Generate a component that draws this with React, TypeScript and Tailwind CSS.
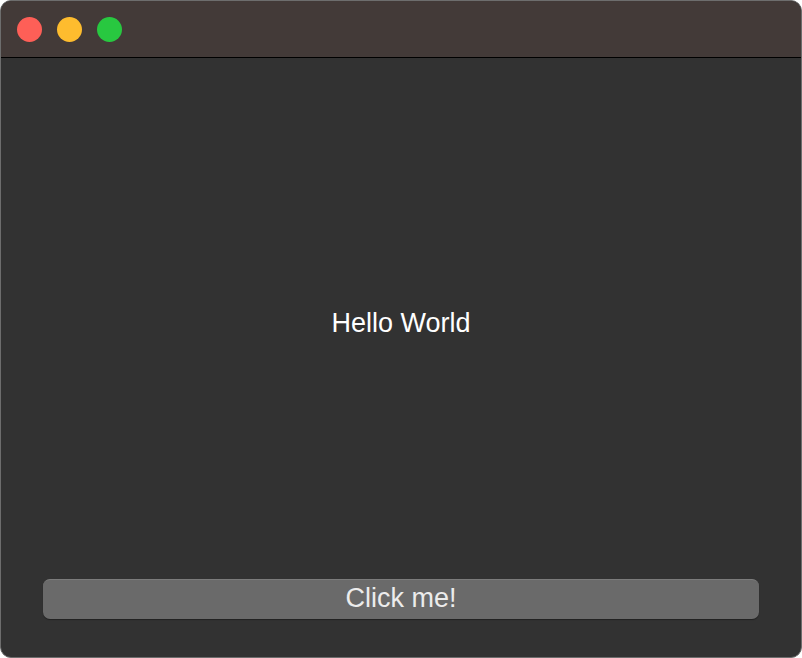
export default function App() {
  return (
    <div className="h-[658px] w-[802px] bg-white">
      <div
        className="flex h-full w-full flex-col overflow-hidden rounded-[11px] border border-[#6d6d6d] bg-[#323232]"
        style={{ fontFamily: '"Liberation Sans", Arial, sans-serif' }}
      >
        {/* title bar */}
        <div className="flex h-[57px] shrink-0 items-center gap-[15px] border-b border-black bg-[#433a38] pl-[16px]">
          <span className="h-[25px] w-[25px] rounded-full bg-[#fe5f57]" />
          <span className="h-[25px] w-[25px] rounded-full bg-[#febc2e]" />
          <span className="h-[25px] w-[25px] rounded-full bg-[#28c840]" />
        </div>

        <div className="flex flex-1 items-center justify-center pt-[9px]">
          <span className="text-[27px] leading-none text-white">Hello World</span>
        </div>

        <button className="mx-[42px] mb-[38px] flex h-[40px] items-center justify-center rounded-[7px] border-t border-[#7c7c7c] bg-[#6a6a6a] pb-[3px] text-[27px] leading-none text-[#ececec] shadow-[0_1px_1px_rgba(0,0,0,0.35)]">
          Click me!
        </button>
      </div>
    </div>
  );
}
